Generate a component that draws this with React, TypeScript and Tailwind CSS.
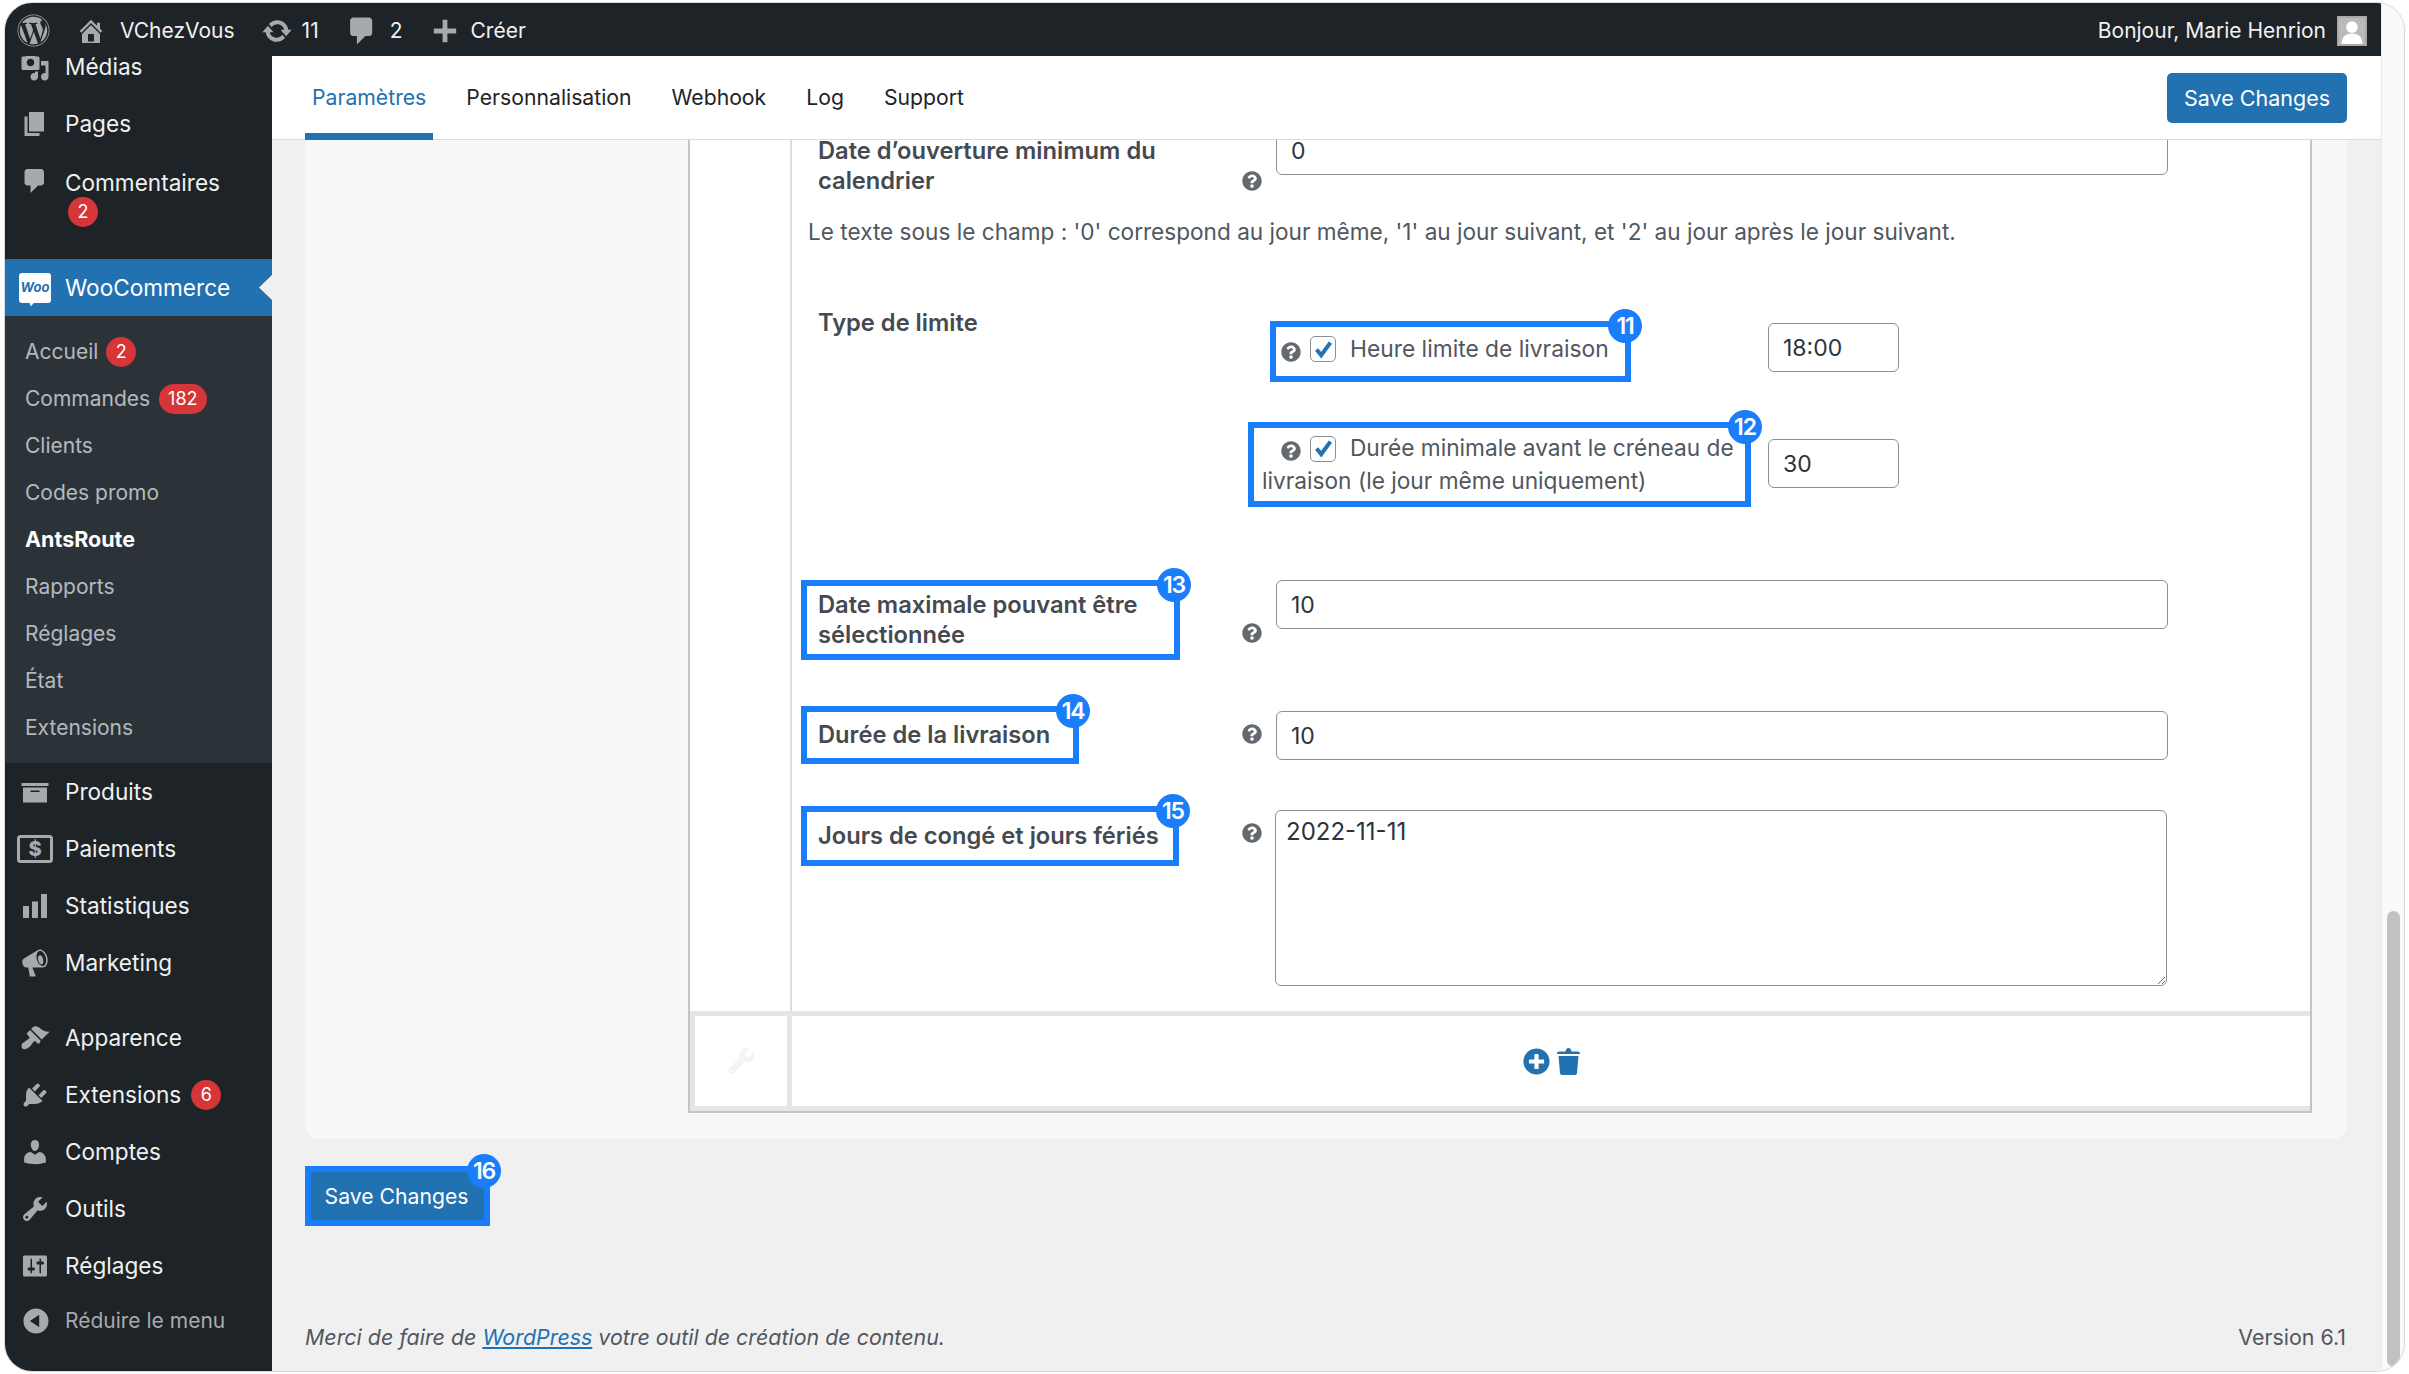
import { FaPlusCircle, FaQuestionCircle, FaWordpress, FaWrench } from "react-icons/fa";

// dashicons, 20x20
const D = {
  home: "M16 8.5l1.53 1.53-1.06 1.06L10 4.62l-6.47 6.47-1.06-1.06L10 2.5l4 4v-2h2v4zm-6-2.46l6 5.99V18H4v-5.97zM12 17v-5H8v5h4z",
  update:
    "M10.2 3.28c3.53 0 6.43 2.61 6.92 6h2.08l-3.5 4-3.5-4h2.32c-.45-1.97-2.21-3.45-4.32-3.45-1.45 0-2.73.71-3.54 1.78L4.95 5.66C6.23 4.2 8.11 3.28 10.2 3.28zm-.4 13.44c-3.52 0-6.43-2.61-6.92-6H.8l3.5-4c1.17 1.33 2.33 2.67 3.5 4H5.48c.45 1.97 2.21 3.45 4.32 3.45 1.45 0 2.73-.71 3.54-1.78l1.71 1.95c-1.28 1.46-3.15 2.38-5.25 2.38z",
  comment: "M5 2h9c1.1 0 2 .9 2 2v7c0 1.1-.9 2-2 2h-2l-5 5v-5H5c-1.1 0-2-.9-2-2V4c0-1.1.9-2 2-2z",
  plus: "M8.5 3h3v5.5H17v3h-5.5V17h-3v-5.5H3v-3h5.5z",
  media:
    "M13 11V4c0-.55-.45-1-1-1h-1.67L9 1H5L3.67 3H2c-.55 0-1 .45-1 1v7c0 .55.45 1 1 1h10c.55 0 1-.45 1-1zM7 4.5c1.38 0 2.5 1.12 2.5 2.5S8.38 9.5 7 9.5 4.5 8.38 4.5 7 5.62 4.5 7 4.5zM14 6h5v10.5c0 1.38-1.12 2.5-2.5 2.5S14 17.88 14 16.5s1.12-2.5 2.5-2.5c.17 0 .34.02.5.05V9h-3V6zm-4 8.05V13h2v3.5c0 1.38-1.12 2.5-2.5 2.5S7 17.88 7 16.5 8.12 14 9.5 14c.17 0 .34.02.5.05z",
  page: "M6 15V2h10v13H6zm-1 1h8v2H3V5h2v11z",
  archive: "M19 4v2H1V4h18zM2 7h16v10H2V7zm11 3V9H7v1h6z",
  chart: "M18 18V2h-4v16h4zm-6 0V7H8v11h4zm-6 0v-8H2v8h4z",
  megaphone:
    "M18.15 5.94c.46 1.62.38 3.22-.02 4.48-.42 1.28-1.26 2.18-2.3 2.48-.16.06-.26.06-.4.06-.06.02-.12.02-.18.02-.06.02-.14.02-.22.02h-6.8l2.22 5.5c.02.14-.06.26-.14.34-.08.1-.24.16-.34.16H6.95c-.1 0-.26-.06-.34-.16-.08-.08-.16-.2-.14-.34l-1-5.5H4.25l-.02-.02c-.5.06-1.08-.18-1.54-.62s-.88-1.08-1.06-1.88c-.24-.8-.2-1.56-.02-2.2.18-.62.58-1.08 1.06-1.3l.02-.02 9-5.4c.1-.06.18-.1.24-.16.06-.04.14-.08.24-.12.16-.08.28-.12.5-.18 1.04-.3 2.24.1 3.22 1 .98.88 1.84 2.24 2.26 3.86zm-2.58 5.98h-.02c.4-.1.74-.34 1.04-.7.58-.7.86-1.76.86-3.04 0-.64-.1-1.3-.28-1.98-.34-1.36-1.02-2.5-1.78-3.24s-1.68-1.1-2.46-.88c-.82.22-1.4.96-1.7 2-.32 1.04-.28 2.36.06 3.72.38 1.36 1 2.5 1.8 3.24.78.74 1.62 1.1 2.48.88zm-2.54-7.08c.22-.04.42-.02.62.04.38.16.76.48 1.1 1s.58 1.14.7 1.84c.16.68.16 1.34.06 1.88-.1.56-.34 1-.7 1.2-.1.06-.2.1-.3.12-.22.04-.42.02-.62-.04-.38-.16-.76-.48-1.1-1s-.58-1.14-.7-1.84c-.16-.68-.16-1.34-.06-1.88.1-.56.34-1 .7-1.2.1-.06.2-.1.3-.12z",
  brush:
    "M14.48 11.06L7.41 3.99l1.5-1.5c.5-.56 2.3-.47 3.51.32 1.21.8 1.43 1.28 2.91 2.1 1.18.64 2.45 1.26 4.45.85zm-.71.71L6.7 4.7 4.93 6.47c-.39.39-.39 1.02 0 1.41l1.06 1.06c.39.39.39 1.03 0 1.42-.6.6-1.43 1.11-2.21 1.69-.35.26-.7.53-1.01.84C1.43 13.23 1 14.4 1 15.5c0 .73.39 1.27.54 1.45.18.18.73.55 1.46.55 1.09 0 2.27-.43 3.6-1.76.31-.31.58-.66.84-1.01.58-.78 1.09-1.61 1.69-2.21.39-.39 1.03-.39 1.42 0l1.06 1.06c.39.39 1.02.39 1.41 0z",
  plugin:
    "M13.11 4.36L9.87 7.6 8 5.73l3.24-3.24c.35-.34 1.05-.2 1.56.32.52.51.66 1.21.31 1.55zm-8 1.77l.91-1.12 9.01 9.01-1.19.84c-.71.71-2.63 1.16-3.82 1.16H6.14L4.9 17.26c-.59.59-1.54.59-2.12 0-.59-.58-.59-1.53 0-2.12l1.24-1.24v-3.88c0-1.13.4-3.19 1.09-3.89zm7.26 3.97l3.24-3.24c.34-.35 1.04-.21 1.55.31.52.51.66 1.21.31 1.55l-3.24 3.25z",
  users:
    "M10 9.25c-2.27 0-2.73-3.44-2.73-3.44C7 4.02 7.82 2 9.97 2c2.16 0 2.98 2.02 2.71 3.81 0 0-.41 3.44-2.68 3.44zm0 2.57L12.72 10c2.39 0 4.52 2.33 4.52 4.53v2.49s-3.65 1.13-7.24 1.13c-3.65 0-7.24-1.13-7.24-1.13v-2.49c0-2.25 1.94-4.48 4.47-4.48z",
  tools:
    "M16.68 9.77c-1.34 1.34-3.3 1.67-4.95.99l-5.41 6.52c-.99.99-2.59.99-3.58 0s-.99-2.59 0-3.57l6.52-5.42c-.68-1.65-.35-3.61.99-4.95 1.28-1.28 3.12-1.62 4.72-1.06l-2.89 2.89 2.82 2.82 2.86-2.87c.53 1.58.18 3.39-1.08 4.65zM3.81 16.21c.4.39 1.04.39 1.43 0 .4-.4.4-1.04 0-1.43-.39-.4-1.03-.4-1.43 0-.39.39-.39 1.03 0 1.43z",
  settings:
    "M18 16V4c0-.55-.45-1-1-1H3c-.55 0-1 .45-1 1v12c0 .55.45 1 1 1h14c.55 0 1-.45 1-1zM8 11h1c.55 0 1 .45 1 1s-.45 1-1 1H8v1.5c0 .28-.22.5-.5.5s-.5-.22-.5-.5V13H6c-.55 0-1-.45-1-1s.45-1 1-1h1V5.5c0-.28.22-.5.5-.5s.5.22.5.5V11zm5-2h-1c-.55 0-1-.45-1-1s.45-1 1-1h1V5.5c0-.28.22-.5.5-.5s.5.22.5.5V7h1c.55 0 1 .45 1 1s-.45 1-1 1h-1v5.5c0 .28-.22.5-.5.5s-.5-.22-.5-.5V9z",
  collapse: "M10 2.16c4.33 0 7.84 3.51 7.84 7.84s-3.51 7.84-7.84 7.84S2.16 14.33 2.16 10 5.71 2.16 10 2.16zm2 11.72V6.12L6.18 9.97z",
};

function Dash({ d, className }: { d: string; className: string }) {
  return (
    <svg viewBox="0 0 20 20" className={className} fill="currentColor">
      <path d={d} />
    </svg>
  );
}

function Count({ n, className = "" }: { n: number; className?: string }) {
  return (
    <span className={`inline-flex h-[30px] min-w-[30px] items-center justify-center rounded-full bg-[#d63638] px-[9px] text-[18px] font-normal leading-none text-white ${className}`}>
      {n}
    </span>
  );
}

function NavItem({ d, label, count }: { d: string; label: string; count?: number }) {
  return (
    <div className="flex h-[57px] items-center pl-[15px] text-[22.6px] text-[#f0f0f1]">
      <Dash d={d} className="h-[30px] w-[30px] shrink-0 text-[#a7aaad]" />
      <span className="ml-[15px] leading-[22px]">{label}</span>
      {count !== undefined && <Count n={count} className="ml-[10px]" />}
    </div>
  );
}

function PaymentsItem() {
  return (
    <div className="flex h-[57px] items-center pl-[15px] text-[22.6px] text-[#f0f0f1]">
      <svg viewBox="0 0 30 30" className="h-[30px] w-[30px] shrink-0 overflow-visible text-[#a7aaad]">
        <rect x="-1.500" y="2.500" width="33" height="25" rx="2" fill="none" stroke="currentColor" strokeWidth="3" />
        <text x="15" y="22" textAnchor="middle" fontSize="20" fontWeight="800" fill="currentColor" fontFamily="Inter">$</text>
      </svg>
      <span className="ml-[15px]">Paiements</span>
    </div>
  );
}

const subItems = ["Clients", "Codes promo", "AntsRoute", "Rapports", "Réglages", "État", "Extensions"];

function Sidebar() {
  return (
    <aside className="flex w-[267px] shrink-0 flex-col bg-[#1d2327]">
      {/* scrolled: this first row sits partly under the admin bar */}
      <div className="flex h-[39px] items-start pl-[15px] text-[22.6px] text-[#f0f0f1]">
        <Dash d={D.media} className="-mt-[4px] h-[30px] w-[30px] shrink-0 text-[#a7aaad]" />
        <span className="ml-[15px] leading-[22px]">Médias</span>
      </div>
      <NavItem d={D.page} label="Pages" />
      <div className="flex h-[107px] items-start pl-[15px] pt-[14px] text-[22.6px] text-[#f0f0f1]">
        <Dash d={D.comment} className="h-[30px] w-[30px] shrink-0 text-[#a7aaad]" />
        <div className="ml-[15px] flex flex-col items-start">
          <span>Commentaires</span>
          <Count n={2} className="-mt-[3px] ml-[3px]" />
        </div>
      </div>
      <div className="relative flex h-[57px] items-center bg-[#2271b1] pl-[14px] text-[22.6px] text-white">
        <div className="relative flex h-[30px] w-[32px] items-center justify-center rounded-[3px] bg-white text-[13px] font-bold italic leading-none text-[#2271b1]">
          Woo
          <div className="absolute -bottom-[4px] left-[10px] h-[5px] w-[6px] bg-white [clip-path:polygon(0_0,100%_0,30%_100%)]" />
        </div>
        <span className="ml-[14px]">WooCommerce</span>
        <div className="absolute right-0 top-[16px] h-[25px] w-[13px] bg-[#f0f0f1] [clip-path:polygon(100%_0,0_50%,100%_100%)]" />
      </div>
      <div className="bg-[#2c3338] py-[12px] pl-[20px] text-[21px] text-[#f0f6fcb3]">
        <div className="flex h-[47px] items-center">
          Accueil <Count n={2} className="ml-[8px]" />
        </div>
        <div className="flex h-[47px] items-center">
          Commandes <Count n={182} className="ml-[9px]" />
        </div>
        {subItems.map((s) => (
          <div key={s} className={`flex h-[47px] items-center ${s === "AntsRoute" ? "text-[21.5px] font-bold text-white" : ""}`}>
            {s}
          </div>
        ))}
      </div>
      <NavItem d={D.archive} label="Produits" />
      <PaymentsItem />
      <NavItem d={D.chart} label="Statistiques" />
      <NavItem d={D.megaphone} label="Marketing" />
      <div className="mt-[18px]">
        <NavItem d={D.brush} label="Apparence" />
        <NavItem d={D.plugin} label="Extensions" count={6} />
        <NavItem d={D.users} label="Comptes" />
        <NavItem d={D.tools} label="Outils" />
        <NavItem d={D.settings} label="Réglages" />
      </div>
      <div className="flex h-[54px] items-center pl-[15px] text-[21px] text-[#a7aaad]">
        <Dash d={D.collapse} className="h-[32px] w-[32px] shrink-0" />
        <span className="ml-[13px]">Réduire le menu</span>
      </div>
    </aside>
  );
}

function AdminBar() {
  return (
    <div className="relative z-20 flex h-[53px] shrink-0 items-center bg-[#1d2327] pl-[12px] pr-[14px] pt-[2px] text-[21px] text-[#f0f0f1]">
      <FaWordpress className="h-[33px] w-[33px] text-[#a7aaad]" />
      <Dash d={D.home} className="ml-[26px] h-[30px] w-[30px] text-[#a7aaad]" />
      <span className="ml-[14px]">VChezVous</span>
      <Dash d={D.update} className="ml-[26px] h-[32px] w-[32px] text-[#a7aaad]" />
      <span className="ml-[9px]">11</span>
      <Dash d={D.comment} className="ml-[26px] h-[34px] w-[34px] text-[#a7aaad]" />
      <span className="ml-[11px]">2</span>
      <Dash d={D.plus} className="ml-[26px] h-[32px] w-[32px] text-[#a7aaad]" />
      <span className="ml-[10px]">Créer</span>
      <span className="ml-auto">Bonjour, Marie Henrion</span>
      <div className="ml-[11px] flex h-[30px] w-[30px] items-end justify-center overflow-hidden border-2 border-[#a7aaad] bg-[#bbbbbb]">
        <svg viewBox="0 0 20 20" className="h-[26px] w-[26px] text-white" fill="currentColor">
          <circle cx="10" cy="7" r="4.5" />
          <path d="M2 20c0-5 3-8 8-8s8 3 8 8z" />
        </svg>
      </div>
    </div>
  );
}

function Badge({ n }: { n: number }) {
  return (
    <span className="absolute -right-[17px] -top-[18px] flex h-[34px] w-[34px] items-center justify-center rounded-full bg-[#1a7efb] text-[23px] font-semibold tracking-tighter text-white">
      {n}
    </span>
  );
}

function Help({ className = "" }: { className?: string }) {
  return <FaQuestionCircle className={`h-[20px] w-[20px] shrink-0 text-[#646970] ${className}`} />;
}

function Check() {
  return (
    <span className="flex h-[26px] w-[26px] shrink-0 items-center justify-center rounded-[5px] border-[1.5px] border-[#8c8f94] bg-white">
      <svg viewBox="0 0 20 20" className="h-[23px] w-[23px] text-[#2271b1]" fill="none" stroke="currentColor" strokeWidth="3.5">
        <path d="M4 10l4 5 8-11" />
      </svg>
    </span>
  );
}

const inputCls =
  "h-[49px] rounded-[6px] border-[1.5px] border-[#8c8f94] bg-white pl-[14px] text-[23px] text-[#2c3338] outline-none";

function Row({ n, top, box, label, help, input }: { n?: number; top: string; box: string; label: React.ReactNode; help: string; input: React.ReactNode }) {
  return (
    <div className={`flex items-start ${top}`}>
      <div className="w-[441px] shrink-0">
        <div className={`relative whitespace-nowrap border-[6px] pl-[11px] text-[23.7px] font-semibold leading-[30px] text-[#444a50] ${box} ${n ? "border-[#1a7efb]" : "border-transparent"}`}>
          {label}
          {n && <Badge n={n} />}
        </div>
      </div>
      <Help className={help} />
      {input}
    </div>
  );
}

function SettingsForm() {
  return (
    <div className="min-w-0 flex-1 pb-[25px] pl-[9px]">
      <Row
        top=""
        box="w-[400px] py-[4px]"
        help="mt-[45px]"
        label={
          <>
            Date d’ouverture minimum du
            <br />
            calendrier
          </>
        }
        input={<input readOnly value="0" className={`ml-[14px] w-[892px] ${inputCls}`} />}
      />
      <p className="ml-[7px] mt-[11px] text-[22.6px] leading-[30px] text-[#50575e]">
        Le texte sous le champ : '0' correspond au jour même, '1' au jour suivant, et '2' au jour après le jour suivant.
      </p>
      <div className="mt-[61px] flex">
        <div className="w-[447px] shrink-0 pl-[17px] text-[23.7px] font-semibold leading-[30px] text-[#444a50]">Type de limite</div>
        <div className="pt-[13px]">
          <div className="flex items-start">
            <div className="w-[520px] pl-[22px]">
              <div className="relative flex h-[61px] w-[361px] items-center border-[6px] border-[#1a7efb] pb-[5px] pl-[5px] text-[22.8px] text-[#50575e]">
                <Help className="mt-[5px]" />
                <span className="ml-[9px]">
                  <Check />
                </span>
                <span className="ml-[14px] whitespace-nowrap">Heure limite de livraison</span>
                <Badge n={11} />
              </div>
            </div>
            <input readOnly value="18:00" className={`mt-[2px] w-[131px] ${inputCls}`} />
          </div>
          <div className="mt-[40px] flex items-start">
            <div className="w-[520px]">
              <div className="relative h-[85px] w-[503px] whitespace-nowrap border-[6px] border-[#1a7efb] pl-[8px] pt-[4px] text-[22.7px] text-[#50575e]">
                <div className="flex h-[33px] items-center pl-[19px]">
                  <Help className="mt-[5px]" />
                  <span className="ml-[9px]">
                    <Check />
                  </span>
                  <span className="ml-[14px]">Durée minimale avant le créneau de</span>
                </div>
                <div className="leading-[31px]">livraison (le jour même uniquement)</div>
                <Badge n={12} />
              </div>
            </div>
            <input readOnly value="30" className={`mt-[17px] w-[131px] ${inputCls}`} />
          </div>
        </div>
      </div>
      <Row
        n={13}
        top="mt-[73px]"
        box="w-[379px] py-[4px]"
        help="mt-[43px]"
        label={
          <>
            Date maximale pouvant être
            <br />
            sélectionnée
          </>
        }
        input={<input readOnly value="10" className={`ml-[14px] w-[892px] ${inputCls}`} />}
      />
      <Row
        n={14}
        top="mt-[46px]"
        box="w-[278px] py-[8px]"
        help="mt-[18px]"
        label="Durée de la livraison"
        input={<input readOnly value="10" className={`ml-[14px] mt-[5px] w-[892px] ${inputCls}`} />}
      />
      <Row
        n={15}
        top="mt-[42px]"
        box="w-[378px] py-[9px]"
        help="mt-[17px]"
        label="Jours de congé et jours fériés"
        input={
          <textarea
            readOnly
            value="2022-11-11"
            className="ml-[13px] mt-[4px] h-[176px] w-[892px] rounded-[6px] border-[1.5px] border-[#8c8f94] bg-white px-[10px] py-[4px] text-[24px] leading-[33px] text-[#2c3338] outline-none"
          />
        }
      />
    </div>
  );
}

function TableFooter() {
  return (
    <div className="flex h-[100px] border-y-[5px] border-[#e5e5e5]">
      <div className="flex w-[102px] shrink-0 items-center justify-center border-x-[5px] border-[#e5e5e5]">
        <FaWrench className="h-[26px] w-[26px] text-[#f2f4f8]" />
      </div>
      <div className="flex flex-1 items-center justify-center gap-[7px]">
        <FaPlusCircle className="h-[27px] w-[27px] text-[#2271b1]" />
        <svg viewBox="0 0 23 27" className="h-[27px] w-[23px] text-[#2271b1]" fill="currentColor">
          <path d="M8.500 3.500C9 1 10 0 11.500 0s2.500 1 3 3.500H21c1 0 2 .8 2 2.500H0c0-1.700 1-2.500 2-2.500z" />
          <path d="M1.500 8h20l-1.500 17c-.1 1.200-1 2-2 2H5c-1 0-1.900-.8-2-2z" />
        </svg>
      </div>
    </div>
  );
}

function Content() {
  return (
    <main className="flex min-w-0 flex-1 flex-col overflow-hidden bg-[#f0f0f1]">
      <header className="relative z-10 flex h-[84px] shrink-0 items-start justify-between border-b border-[#dcdcde] bg-white pl-[33px] pr-[34px]">
        <nav className="flex gap-[26px] text-[21.2px] text-[#1d2327]">
          <div className="h-[84px] rounded-t-[4px] border-b-[7px] border-[#2271b1] px-[7px] pt-[27px] leading-[28px] text-[#2271b1]">Paramètres</div>
          {["Personnalisation", "Webhook", "Log", "Support"].map((t) => (
            <div key={t} className="px-[7px] pt-[27px] leading-[28px]">
              {t}
            </div>
          ))}
        </nav>
        <button className="mt-[17px] flex h-[50px] w-[180px] items-center justify-center rounded-[5px] bg-[#2271b1] text-[21.5px] text-white">Save Changes</button>
      </header>
      <div className="-mt-[14px] ml-[33px] w-[2042px]">
        <section className="rounded-b-[14px] bg-[#f7f7f7] pb-[26px] pl-[383px] pr-[35px]">
          <div className="border-x-2 border-b-2 border-x-[#c3c4c7] border-b-[#c3c4c7] bg-white">
            <div className="flex">
              <div className="w-[102px] shrink-0 border-r-2 border-[#dcdcde]" />
              <SettingsForm />
            </div>
            <TableFooter />
          </div>
        </section>
        <div className="relative mt-[27px] h-[60px] w-[185px] border-[6px] border-[#1a7efb]">
          <button className="h-full w-full bg-[#2271b1] pr-[2px] pt-[1px] text-[21.2px] text-white">Save Changes</button>
          <Badge n={16} />
        </div>
        <footer className="mt-[96px] flex justify-between pr-[1px] text-[21.4px] leading-[30px] text-[#50575e]">
          <p className="italic">
            Merci de faire de <span className="text-[#2271b1] underline">WordPress</span> votre outil de création de contenu.
          </p>
          <p>Version 6.1</p>
        </footer>
      </div>
    </main>
  );
}

export default function App() {
  return (
    <div className="h-[1374px] w-[2409px] bg-white pl-[4px] pt-[2px] font-[Inter,sans-serif]">
      <div className="flex h-[1370px] w-[2401px] overflow-hidden rounded-[28px] border border-[#d8d8d8] bg-[#fafafa]">
        <div className="flex w-[2376px] shrink-0 flex-col">
          <AdminBar />
          <div className="flex min-h-0 flex-1">
            <Sidebar />
            <Content />
          </div>
        </div>
        <div className="flex-1 border-l border-[#e8e8e8] pl-[5px] pt-[908px]">
          <div className="h-[456px] w-[13px] rounded-full bg-[#c1c1c1]" />
        </div>
      </div>
    </div>
  );
}
